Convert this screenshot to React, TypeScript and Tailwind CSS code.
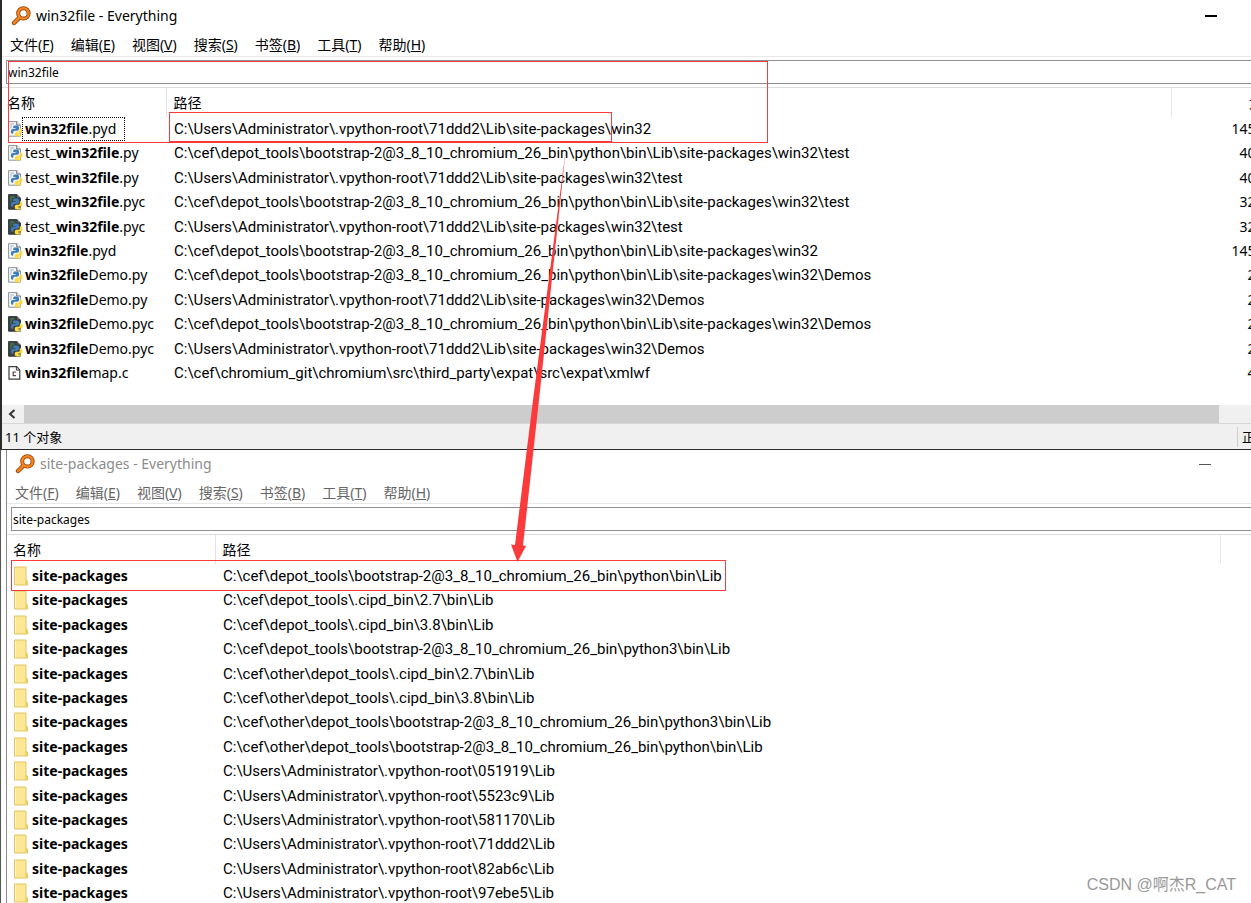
import type { ReactNode } from "react";

const menus = [
  ["文件", "F"],
  ["编辑", "E"],
  ["视图", "V"],
  ["搜索", "S"],
  ["书签", "B"],
  ["工具", "T"],
  ["帮助", "H"],
];

const rowClass = "h-6 nth-[5n]:h-[25px] nth-[5n+3]:h-[25px]";
const pathClass = "p-0 pl-2 font-[Roboto,sans-serif] text-[15px] whitespace-nowrap";

type Kind = "py" | "pyc" | "c";

interface FileRow {
  kind: Kind;
  pre?: string;
  post: string;
  path: string;
  size: string;
}

const BOOT = "C:\\cef\\depot_tools\\bootstrap-2@3_8_10_chromium_26_bin\\python\\bin\\Lib\\site-packages\\win32";
const ADMIN = "C:\\Users\\Administrator\\.vpython-root\\71ddd2\\Lib\\site-packages\\win32";

const files: FileRow[] = [
  { kind: "py", post: ".pyd", path: ADMIN, size: "145 KB" },
  { kind: "py", pre: "test_", post: ".py", path: BOOT + "\\test", size: "40 KB" },
  { kind: "py", pre: "test_", post: ".py", path: ADMIN + "\\test", size: "40 KB" },
  { kind: "pyc", pre: "test_", post: ".pyc", path: BOOT + "\\test", size: "32 KB" },
  { kind: "pyc", pre: "test_", post: ".pyc", path: ADMIN + "\\test", size: "32 KB" },
  { kind: "py", post: ".pyd", path: BOOT, size: "145 KB" },
  { kind: "py", post: "Demo.py", path: BOOT + "\\Demos", size: "2 KB" },
  { kind: "py", post: "Demo.py", path: ADMIN + "\\Demos", size: "2 KB" },
  { kind: "pyc", post: "Demo.pyc", path: BOOT + "\\Demos", size: "2 KB" },
  { kind: "pyc", post: "Demo.pyc", path: ADMIN + "\\Demos", size: "2 KB" },
  { kind: "c", post: "map.c", path: "C:\\cef\\chromium_git\\chromium\\src\\third_party\\expat\\src\\expat\\xmlwf", size: "4 KB" },
];

const folders = [
  "C:\\cef\\depot_tools\\bootstrap-2@3_8_10_chromium_26_bin\\python\\bin\\Lib",
  "C:\\cef\\depot_tools\\.cipd_bin\\2.7\\bin\\Lib",
  "C:\\cef\\depot_tools\\.cipd_bin\\3.8\\bin\\Lib",
  "C:\\cef\\depot_tools\\bootstrap-2@3_8_10_chromium_26_bin\\python3\\bin\\Lib",
  "C:\\cef\\other\\depot_tools\\.cipd_bin\\2.7\\bin\\Lib",
  "C:\\cef\\other\\depot_tools\\.cipd_bin\\3.8\\bin\\Lib",
  "C:\\cef\\other\\depot_tools\\bootstrap-2@3_8_10_chromium_26_bin\\python3\\bin\\Lib",
  "C:\\cef\\other\\depot_tools\\bootstrap-2@3_8_10_chromium_26_bin\\python\\bin\\Lib",
  "C:\\Users\\Administrator\\.vpython-root\\051919\\Lib",
  "C:\\Users\\Administrator\\.vpython-root\\5523c9\\Lib",
  "C:\\Users\\Administrator\\.vpython-root\\581170\\Lib",
  "C:\\Users\\Administrator\\.vpython-root\\71ddd2\\Lib",
  "C:\\Users\\Administrator\\.vpython-root\\82ab6c\\Lib",
  "C:\\Users\\Administrator\\.vpython-root\\97ebe5\\Lib",
];

function AppIcon() {
  return (
    <svg viewBox="0 0 20 20" className="size-5 shrink-0" fill="none" aria-hidden="true">
      <circle cx="12.4" cy="7.4" r="5.2" stroke="#8a3f08" strokeWidth="4" />
      <path d="M8.4 11.6 3 17" stroke="#8a3f08" strokeWidth="4.4" strokeLinecap="round" />
      <circle cx="12.4" cy="7.4" r="5.2" stroke="#f5831f" strokeWidth="2.5" />
      <path d="M8.4 11.6 3 17" stroke="#f5831f" strokeWidth="2.8" strokeLinecap="round" />
    </svg>
  );
}

function FileIcon({ kind }: { kind: Kind }) {
  if (kind === "c") {
    return (
      <svg viewBox="0 0 15 16" className="h-4 w-[15px] shrink-0" fill="none" aria-hidden="true">
        <path d="M1 1.7h7.6l3.2 3.2v9.2H1z" fill="#fff" stroke="#3c3c3c" strokeWidth="1.2" />
        <path d="M8.4 1.7v3.4h3.4" stroke="#3c3c3c" />
        <path d="M8 7H5.2v3.6H8" stroke="#5a3d4c" strokeWidth="1.2" />
      </svg>
    );
  }
  const dark = kind === "pyc";
  return (
    <svg viewBox="0 0 15 16" className="h-4 w-[15px] shrink-0" fill="none" aria-hidden="true">
      <path d="M.6.6h8.2l3.6 3.4v11.2H.6z" fill={dark ? "#3b4245" : "#f7f8f9"} stroke={dark ? "#2f3639" : "#8b9298"} />
      <path d="M8.8.6V4h3.6" fill={dark ? "#6d757a" : "#fff"} stroke={dark ? "#2f3639" : "#5f666c"} />
      <path d="M2.2 3h4M2.2 5h2M2.2 7h1.4" stroke={dark ? "#3f9a55" : "#a9b2ba"} />
      <path d="M6 4.6h3q2 0 2 2V8q0 1.800-1.800 1.800H7q-1.800 0-1.800 1.800v1.200h-.8q-1.600 0-1.600-2.400T4.800 8h2.800v-.8H5.200V5.400z" fill="#3f7db8" />
      <path d="M11.800 7.200h.8q2 .2 2 2.800t-1.800 2.600h-2.400v.8h2.600v.8q-.4 1.400-3 1.400t-3.200-1.400v-1.800q0-1.600 1.600-1.600h1.800q1.600 0 1.600-1.600z" fill="#fbd93f" />
    </svg>
  );
}

function FolderIcon() {
  return (
    <svg viewBox="0 0 16 20" className="h-5 w-4 shrink-0" aria-hidden="true">
      <path d="M1.500 1h11.500v13l1.500 1v4h-13z" fill="#fbe794" stroke="#e3c565" />
      <path d="M12.500 19v-6l2.200 2v4z" fill="#eccb62" />
      <path d="M2.500 2v16" stroke="#fff3bd" />
    </svg>
  );
}

function TitleBar({ title, muted }: { title: string; muted?: boolean }) {
  return (
    <header className={`flex items-center gap-[5px] ${muted ? "h-7 pl-2 text-[#8c8c8c]" : "h-8 pl-[9px] text-black"}`}>
      <AppIcon />
      <h1 className="grow">{title}</h1>
      <button type="button" aria-label="Minimize" className={`flex h-full w-20 items-center ${muted ? "pl-7" : "pl-[34px]"}`}>
        <span className={`w-3 ${muted ? "h-px bg-[#555]" : "h-0.5 bg-black"}`} />
      </button>
    </header>
  );
}

function MenuBar({ muted }: { muted?: boolean }) {
  return (
    <nav className={`flex items-center gap-[17px] border-b border-[#e8e8e8] pl-2 ${muted ? "h-[26px] pt-1 text-[#666]" : "h-[25px] pt-0.5 text-black"}`}>
      {menus.map(([label, key]) => (
        <button key={key} type="button" className="whitespace-nowrap">
          {label}(<span className="underline">{key}</span>)
        </button>
      ))}
    </nav>
  );
}

function SearchBox({ value }: { value: string }) {
  return (
    <div className="border-b border-[#dcdcdc] py-[3px] pl-1">
      <input
        aria-label="Search"
        defaultValue={value}
        className="block h-6 w-full border border-r-0 border-[#8f8f8f] pl-px text-[12px] outline-none"
      />
    </div>
  );
}

function HeadCell({ children, className = "" }: { children?: ReactNode; className?: string }) {
  return <th scope="col" className={`h-[29px] p-0 font-normal ${className}`}>{children}</th>;
}

export default function App() {
  return (
    <main
      lang="zh-CN"
      className="relative flex h-screen flex-col overflow-hidden bg-white font-['Noto_Sans','Noto_Sans_CJK_SC',sans-serif] text-[14px] leading-5 text-black"
    >
      <section className="shrink-0 overflow-hidden border-b border-l-2 border-[#2b2b2b]">
        <TitleBar title="win32file - Everything" />
        <MenuBar />
        <SearchBox value="win32file" />
        <table className="mb-5 w-[calc(100%+26px)] table-fixed border-collapse">
          <colgroup>
            <col className="w-[164px]" />
            <col />
            <col className="w-[106px]" />
          </colgroup>
          <thead>
            <tr>
              <HeadCell className="border-r border-[#e2e2e2] pl-[5px] text-left">名称</HeadCell>
              <HeadCell className="border-r border-[#e8e8e8] pl-[7px] text-left">路径</HeadCell>
              <HeadCell className="text-right">大小</HeadCell>
            </tr>
          </thead>
          <tbody>
            {files.map((f, i) => (
              <tr key={i} className={rowClass}>
                <td className="p-0 pl-1.5">
                  <div className="flex items-center whitespace-nowrap">
                    <FileIcon kind={f.kind} />
                    <span className={`py-px pr-2 pl-0.5 ${i === 0 ? "outline-1 outline-dotted outline-black" : ""}`}>
                      {f.pre}
                      <b>win32file</b>
                      {f.post}
                    </span>
                  </div>
                </td>
                <td className={pathClass}>{f.path}</td>
                <td className="p-0 text-right whitespace-nowrap">{f.size}</td>
              </tr>
            ))}
          </tbody>
        </table>
        <div className="flex h-[18px] bg-[#f0f0f0]">
          <button type="button" aria-label="Scroll left" className="flex w-[22px] items-center pl-1.5">
            <svg viewBox="0 0 8 10" className="h-2.5 w-2" fill="none" aria-hidden="true">
              <path d="M6.500 1 2 5l4.500 4" stroke="#333" strokeWidth="2" />
            </svg>
          </button>
          <div className="mr-8 grow bg-[#cdcdcd]" />
        </div>
        <footer className="flex h-[26px] items-center border-t border-[#d7d7d7] bg-[#f0f0f0] pl-[3px] text-[13px]">
          <span className="grow">11 个对象</span>
          <span className="w-3.5 overflow-hidden border-l border-[#cfcfcf] pl-1 whitespace-nowrap">正常</span>
        </footer>
      </section>

      <div className="grow border-l border-[#555] pl-[5px]">
        <section className="h-full border-l border-[#8a8a8a]">
          <TitleBar title="site-packages - Everything" muted />
          <MenuBar muted />
          <SearchBox value="site-packages" />
          <table className="w-full table-fixed border-collapse">
            <colgroup>
              <col className="w-[208px]" />
              <col />
              <col className="w-[31px]" />
            </colgroup>
            <thead>
              <tr>
                <HeadCell className="border-r border-[#e2e2e2] pl-1.5 text-left">名称</HeadCell>
                <HeadCell className="border-r border-[#e8e8e8] pl-[7px] text-left">路径</HeadCell>
                <HeadCell />
              </tr>
            </thead>
            <tbody>
              {folders.map((path) => (
                <tr key={path} className={rowClass}>
                  <td className="p-0 pl-1.5">
                    <div className="flex items-center gap-[3px]">
                      <FolderIcon />
                      <b>site-packages</b>
                    </div>
                  </td>
                  <td className={pathClass}>{path}</td>
                  <td className="p-0" />
                </tr>
              ))}
            </tbody>
          </table>
        </section>
      </div>

      {/* red mark-up drawn over both windows */}
      <svg className="pointer-events-none absolute top-0 left-0 h-full w-full" fill="none" aria-hidden="true">
        <g stroke="#fb3b3b" shapeRendering="crispEdges">
          <rect x="8.500" y="61.500" width="759" height="81" />
          <rect x="169.500" y="112.500" width="442" height="29" />
          <rect x="11.500" y="560.500" width="714" height="30" />
        </g>
        <path d="M566 148 533 400 515 545l-4-.5L517.500 562 526 546l-3-.5L539 400z" fill="#fb3b3b" />
      </svg>
      <p className="absolute right-[15px] bottom-2 font-['Liberation_Sans','Noto_Sans_CJK_SC',sans-serif] text-[16px] text-[#999]">
        CSDN @啊杰R_CAT
      </p>
    </main>
  );
}
